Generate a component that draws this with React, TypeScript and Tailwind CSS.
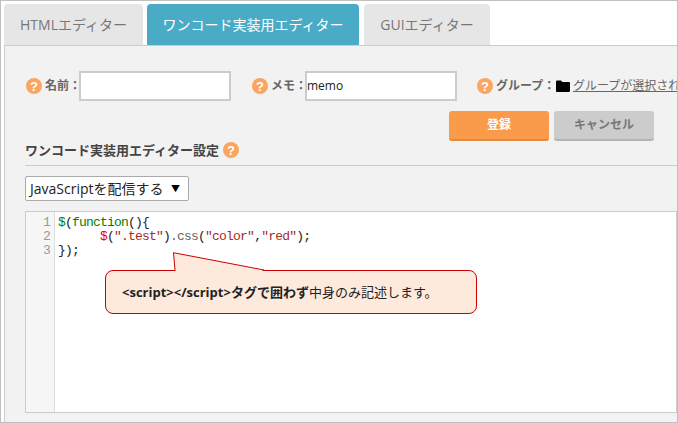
import React from "react";

const sans = "font-['Open_Sans','Noto_Sans_CJK_JP',sans-serif]";

function Help() {
  return (
    <span className="flex h-4 w-4 shrink-0 items-center justify-center rounded-full bg-[#fba660] font-['Liberation_Sans',sans-serif] text-[13px] leading-none font-bold text-white">
      ?
    </span>
  );
}

function Field({ label, value, className }: { label: string; value?: string; className: string }) {
  return (
    <div className={`flex shrink-0 items-center ${className}`}>
      <Help />
      <span className="ml-[3px] w-[34px] text-[12px] font-bold whitespace-nowrap text-[#666]">{label}</span>
      <div className="flex h-[30px] w-[152px] items-center border-2 border-[#ccc] bg-white text-[12px] text-[#222]">{value}</div>
    </div>
  );
}

export default function App() {
  return (
    <div className={`h-[423px] w-[678px] overflow-hidden border border-[#c0c0c0] bg-white pt-[3px] pl-[3px] ${sans}`}>
      <div className="flex h-[41px] items-end text-[14px]">
        <div className="flex h-[41px] w-[139px] items-center justify-center rounded-t bg-[#e6e6e6] text-[#777]">HTMLエディター</div>
        <div className="ml-1 flex h-[41px] w-[212px] items-center justify-center rounded-t bg-[#4aabc6] text-white">ワンコード実装用エディター</div>
        <div className="ml-[5px] flex h-[41px] w-[126px] items-center justify-center rounded-t bg-[#e6e6e6] text-[#777]">GUIエディター</div>
      </div>
      <div className="h-[377px] border-t border-l border-[#ccc] bg-[#f2f2f2] pt-[25px] pl-5">
        <div className="flex h-[30px] items-center overflow-hidden">
          <Field label="名前：" className="ml-px" />
          <Field label="メモ：" value="memo" className="ml-[21px]" />
          <div className="ml-5 flex items-center whitespace-nowrap">
            <Help />
            <span className="ml-[3px] w-[60px] text-[12px] font-bold text-[#666]">グループ：</span>
            <svg width="14" height="12" viewBox="0 0 14 12" className="shrink-0" aria-hidden="true">
              <path d="M0 1.5Q0 .5 1 .5H5L6.5 2H13Q14 2 14 3V11Q14 12 13 12H1Q0 12 0 11Z" fill="#000" />
            </svg>
            <span className="ml-[3px] text-[12px] text-[#666] underline">グループが選択されていません</span>
          </div>
        </div>
        <div className="mt-[10px] flex justify-end gap-[5px] pr-[23px] text-[12px]">
          <div className="flex h-[30px] w-[100px] items-center justify-center rounded-[3px] border-b-2 border-[#e08a42] bg-[#fa9a4b] font-bold text-white">登録</div>
          <div className="flex h-[30px] w-[100px] items-center justify-center rounded-[3px] border-b-2 border-[#b3b3b3] bg-[#cccccc] font-bold text-[#777]">キャンセル</div>
        </div>
        <div className="mt-px flex items-center border-b border-[#ccc] pb-[7px] text-[13px] font-bold text-[#444]">
          <span className="whitespace-nowrap leading-4">ワンコード実装用エディター設定</span>
          <span className="ml-1"><Help /></span>
        </div>
        <div className="mt-[10px] flex h-[25px] w-[164px] items-center justify-between rounded-[2px] border border-[#aaa] bg-white pr-2 pl-1 text-[14px] text-[#222]">
          <span className="whitespace-nowrap">JavaScriptを配信する</span>
          <span className="text-[9px] text-black">▼</span>
        </div>
        <div className="relative mt-[10px] flex h-[202px] border border-[#ccc] bg-white font-['Liberation_Mono',monospace] text-[13px] leading-[14px] tracking-[-0.8px]">
          <div className="w-[29px] shrink-0 border-r border-[#ddd] bg-[#f6f6f6] pt-1 pr-1 text-right text-[#999]">
            <div>1</div>
            <div>2</div>
            <div>3</div>
          </div>
          <div className="pt-1 pl-[3px] whitespace-pre text-[#222]">
            <div><span className="text-[#008000]">$</span>(<span className="text-[#008000]">function</span>(){"{"}</div>
            <div>{"      "}<span className="text-[#e00000]">$</span>(<span className="text-[#a52a2a]">".test"</span>)<span className="text-[#666]">.css</span>(<span className="text-[#a52a2a]">"color"</span>,<span className="text-[#a52a2a]">"red"</span>);</div>
            <div>{"});"}</div>
          </div>
          <div className={`absolute top-[58px] left-[79px] flex h-[44px] w-[372px] items-center rounded-[8px] border border-[#cc0000] bg-[#fdeadc] pl-4 text-[13px] tracking-normal text-[#222] ${sans}`}>
            <span className="whitespace-nowrap"><b>&lt;script&gt;&lt;/script&gt;タグで囲わず</b>中身のみ記述します。</span>
          </div>
          <svg width="94" height="19" viewBox="0 0 94 19" className="absolute top-[40px] left-[146px]" aria-hidden="true">
            <path d="M3 18 L1.5 .7 L92 18" fill="#fdeadc" stroke="#cc0000" strokeWidth="1" />
            <rect x="3.5" y="18" width="87" height="1" fill="#fdeadc" />
          </svg>
        </div>
      </div>
    </div>
  );
}
